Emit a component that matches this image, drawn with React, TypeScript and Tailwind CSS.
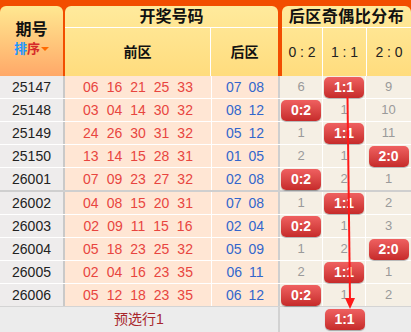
import React from 'react';

type Ratio = '0:2' | '1:1' | '2:0';

const rows: { issue: string; front: string[]; back: string[]; ratio: Ratio; miss: [string, string, string] }[] = [
  { issue: '25147', front: ['06', '16', '21', '25', '33'], back: ['07', '08'], ratio: '1:1', miss: ['6', '', '9'] },
  { issue: '25148', front: ['03', '04', '14', '30', '32'], back: ['08', '12'], ratio: '0:2', miss: ['', '1', '10'] },
  { issue: '25149', front: ['24', '26', '30', '31', '32'], back: ['05', '12'], ratio: '1:1', miss: ['1', '', '11'] },
  { issue: '25150', front: ['13', '14', '15', '28', '31'], back: ['01', '05'], ratio: '2:0', miss: ['2', '1', ''] },
  { issue: '26001', front: ['07', '09', '23', '27', '32'], back: ['02', '08'], ratio: '0:2', miss: ['', '2', '1'] },
  { issue: '26002', front: ['04', '08', '15', '20', '31'], back: ['07', '08'], ratio: '1:1', miss: ['1', '', '2'] },
  { issue: '26003', front: ['02', '09', '11', '15', '16'], back: ['02', '04'], ratio: '0:2', miss: ['', '1', '3'] },
  { issue: '26004', front: ['05', '18', '23', '25', '32'], back: ['05', '09'], ratio: '2:0', miss: ['1', '2', ''] },
  { issue: '26005', front: ['02', '04', '16', '23', '35'], back: ['06', '11'], ratio: '1:1', miss: ['2', '', '1'] },
  { issue: '26006', front: ['05', '12', '18', '23', '35'], back: ['06', '12'], ratio: '0:2', miss: ['', '1', '2'] },
];

const ratios: Ratio[] = ['0:2', '1:1', '2:0'];

const Badge = ({ label }: { label: string }) => (
  <div className="flex h-[21px] w-[40px] items-center justify-center rounded-[5px] bg-gradient-to-b from-[#ef6060] to-[#c62a2a] text-[14px] font-bold text-white shadow-[0_1px_1px_rgba(0,0,0,0.3)]">
    {label}
  </div>
);

const DistCell = ({ value, hit, last }: { value: string; hit: boolean; last?: boolean }) => (
  <div
    className={`flex h-full items-center justify-center bg-[#f5efe4] text-[13px] text-[#9a9a9a] ${
      last ? 'flex-1' : 'w-[43px] border-r border-white'
    }`}
  >
    {hit ? <Badge label={value} /> : value}
  </div>
);

export default function App() {
  return (
    <div className="relative h-[332px] w-[411px] overflow-hidden bg-[#f24d00] font-['Liberation_Sans','Noto_Sans_CJK_SC',sans-serif]">
      {/* header */}
      <div className="flex h-[76px] pt-[6px]">
        <div className="flex w-[63px] flex-col items-center justify-center rounded-t-[6px] bg-gradient-to-b from-[#ffe891] to-[#ffa868] pb-[6px]">
          <div className="text-[16px] font-bold leading-[22px] text-[#111]">期号</div>
          <div className="flex items-center text-[13px] font-bold leading-[16px]">
            <span className="text-[#1e96ff]">排</span>
            <span className="text-[#d62a2a]">序</span>
            <span className="ml-[1px] h-0 w-0 border-x-[4px] border-t-[4px] border-x-transparent border-t-[#ff6a00]" />
          </div>
        </div>
        <div className="ml-[2px] flex w-[213px] flex-col rounded-t-[6px] bg-gradient-to-b from-[#ffea9c] to-[#ffdc7d]">
          <div className="flex h-[22px] items-center justify-center border-b border-white text-[16px] font-bold text-[#111]">
            开奖号码
          </div>
          <div className="flex flex-1 text-[14px] font-bold text-[#111]">
            <div className="flex w-[146px] items-center justify-center border-r border-white">前区</div>
            <div className="flex flex-1 items-center justify-center">后区</div>
          </div>
        </div>
        <div className="ml-[4px] flex flex-1 flex-col rounded-t-[6px] bg-gradient-to-b from-[#ffea9c] to-[#ffdc7d]">
          <div className="flex h-[22px] items-center justify-center border-b border-white text-[16px] font-bold tracking-[0.5px] text-[#111]">
            后区奇偶比分布
          </div>
          <div className="flex flex-1 text-[14px] text-[#222]">
            <div className="flex w-[41px] items-center justify-center border-r border-white">0 : 2</div>
            <div className="flex w-[44px] items-center justify-center border-r border-white">1 : 1</div>
            <div className="flex flex-1 items-center justify-center">2 : 0</div>
          </div>
        </div>
      </div>

      {/* body */}
      {rows.map((r, i) => (
        <div
          key={r.issue}
          className={`flex h-[23px] ${
            i === 4 ? 'h-[24px] border-b-2 border-[#cfcfcf]' : i === 9 ? 'border-b border-[#d4d4d4]' : 'border-b border-white'
          }`}
        >
          <div className="flex w-[65px] items-center justify-center border-r-2 border-[#c9c9c9] bg-[#eeecec] text-[14px] text-[#222]">
            {r.issue}
          </div>
          <div className="flex w-[147px] items-center justify-center gap-[8px] border-r border-white bg-[#ffe6d4] text-[14px] text-[#e8453f]">
            {r.front.map((n, k) => (
              <span key={k}>{n}</span>
            ))}
          </div>
          <div className="flex w-[68px] items-center justify-center gap-[7px] border-r-2 border-[#cfcfcf] bg-[#ffe6d4] text-[14px] text-[#3366cc]">
            {r.back.map((n, k) => (
              <span key={k}>{n}</span>
            ))}
          </div>
          <div className="flex flex-1">
            {ratios.map((q, k) => (
              <DistCell key={q} value={r.ratio === q ? q : r.miss[k]} hit={r.ratio === q} last={k === 2} />
            ))}
          </div>
        </div>
      ))}

      {/* footer */}
      <div className="flex h-[25px] bg-[#ececec]">
        <div className="flex w-[280px] items-center justify-center border-r-2 border-[#d2d2d2] text-[14px] text-[#a8262b]">
          预选行1
        </div>
        <div className="flex flex-1 items-center">
          <div className="w-[43px]" />
          <div className="flex w-[43px] items-center justify-center">
            <Badge label="1:1" />
          </div>
        </div>
      </div>

      {/* trend arrow */}
      <svg className="pointer-events-none absolute left-0 top-0" width="411" height="332">
        <line x1="347.5" y1="97" x2="350" y2="300" stroke="#ff1a1a" strokeWidth="2" />
        <polygon points="345,298 355,298 350,309" fill="#ff1a1a" />
      </svg>
    </div>
  );
}
